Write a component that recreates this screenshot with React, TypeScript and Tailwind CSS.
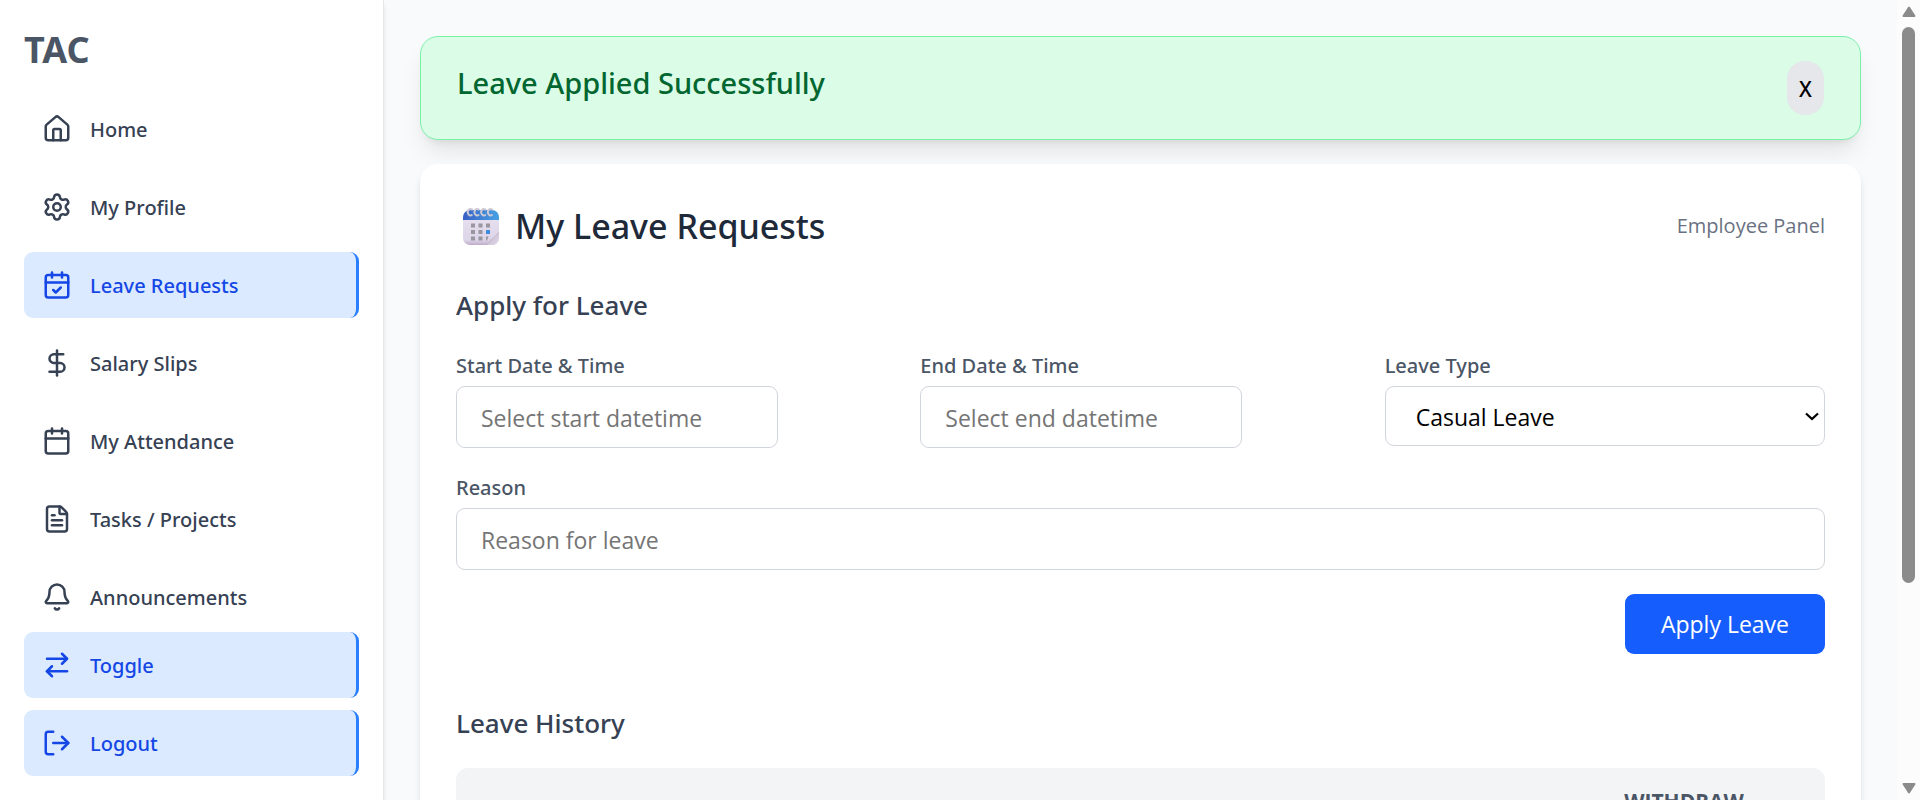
import { useState } from "react";
import {
  ArrowRightLeft,
  Bell,
  Calendar,
  CalendarCheck,
  DollarSign,
  FileText,
  House,
  LogOut,
  Settings,
  type LucideIcon,
} from "lucide-react";

type Item = { label: string; icon: LucideIcon; active?: boolean };

const navItems: Item[] = [
  { label: "Home", icon: House },
  { label: "My Profile", icon: Settings },
  { label: "Leave Requests", icon: CalendarCheck, active: true },
  { label: "Salary Slips", icon: DollarSign },
  { label: "My Attendance", icon: Calendar },
  { label: "Tasks / Projects", icon: FileText },
  { label: "Announcements", icon: Bell },
];

const itemBase =
  "flex h-[66px] w-full shrink-0 items-center gap-[18px] rounded-[9px] px-[18px] text-left text-[20px] font-medium";
const itemActive = "border-r-[3px] border-blue-500 bg-blue-100 text-blue-700";
const itemIdle = "text-gray-700";

function NavLink({ label, icon: Icon, active }: Item) {
  return (
    <a href="#" className={`${itemBase} ${active ? itemActive : itemIdle}`}>
      <Icon size={30} />
      <span className="pt-0.5">{label}</span>
    </a>
  );
}

function SideButton({ label, icon: Icon }: Item) {
  return (
    <button type="button" className={`${itemBase} ${itemActive}`}>
      <Icon size={30} />
      <span className="pt-0.5">{label}</span>
    </button>
  );
}

function Sidebar() {
  return (
    <aside className="z-10 flex w-96 shrink-0 flex-col border-r border-gray-200 bg-white p-6 font-['Noto_Sans','Open_Sans',sans-serif] shadow-md">
      <h1 className="mb-5 text-[36px] leading-[52px] font-bold text-gray-600">TAC</h1>
      <nav className="flex min-h-0 flex-1 flex-col gap-3 overflow-hidden">
        {navItems.map((item) => (
          <NavLink key={item.label} {...item} />
        ))}
      </nav>
      <div className="flex flex-col gap-3">
        <SideButton label="Toggle" icon={ArrowRightLeft} />
        <SideButton label="Logout" icon={LogOut} />
      </div>
    </aside>
  );
}

function CalendarEmoji() {
  return (
    <svg viewBox="0 0 36 37" className="h-[37px] w-9 shrink-0" aria-hidden="true">
      <defs>
        <linearGradient id="calPaper" x1="0" y1="0" x2="0" y2="1">
          <stop offset="0" stopColor="#e9e3f1" />
          <stop offset="0.85" stopColor="#ddd5e8" />
          <stop offset="1" stopColor="#bfaccb" />
        </linearGradient>
        <linearGradient id="calTop" x1="0" y1="0" x2="1" y2="0">
          <stop offset="0" stopColor="#3a5fc4" />
          <stop offset="0.6" stopColor="#4289d8" />
          <stop offset="1" stopColor="#47a0e2" />
        </linearGradient>
        <linearGradient id="calFold" x1="0" y1="0" x2="1" y2="1">
          <stop offset="0" stopColor="#f0ebf5" />
          <stop offset="0.5" stopColor="#cfc6d9" />
          <stop offset="1" stopColor="#e4dded" />
        </linearGradient>
      </defs>
      <rect x="0" y="3" width="36" height="34" rx="7" fill="url(#calPaper)" />
      <path d="M0 12V9a7 7 0 0 1 7-7h22a7 7 0 0 1 7 7v3z" fill="url(#calTop)" />
      <g fill="#98969e">
        <rect x="8" y="15.5" width="4" height="4" />
        <rect x="15.5" y="15.5" width="4" height="4" />
        <rect x="23" y="15.5" width="4" height="4" />
        <rect x="8" y="22" width="4" height="4" />
        <rect x="15.5" y="22" width="4" height="4" />
        <rect x="8" y="28.5" width="4" height="4" />
        <rect x="15.5" y="28.5" width="4" height="4" />
        <path d="M23 28.5h2.500l-1.500 4h-1z" />
      </g>
      <rect x="23" y="22" width="4" height="4" fill="#3e8bdc" />
      <path d="M24 37c1.500-2 2-4 2-6 4 0 7-3 10-7v6a7 7 0 0 1-7 7z" fill="url(#calFold)" />
      <path d="M24 37 36 24" stroke="#c3b8cf" strokeWidth="0.8" />
      <g fill="none" stroke="#cdc9d4" strokeWidth="2" strokeLinecap="round">
        <path d="M9 1.500C6 0 4 3 5 5.500c.6 1.800 2.500 2.500 3.800 1.500" />
        <path d="M15.700 1.500c-3-1.500-5 1.500-4 4 .6 1.800 2.500 2.500 3.800 1.500" />
        <path d="M22.400 1.500c-3-1.500-5 1.500-4 4 .6 1.800 2.500 2.500 3.800 1.500" />
        <path d="M29.100 1.500c-3-1.500-5 1.500-4 4 .6 1.800 2.500 2.500 3.800 1.500" />
      </g>
    </svg>
  );
}

const labelClass =
  "font-['Noto_Sans','Open_Sans',sans-serif] text-[20px] leading-8 font-medium text-gray-600";
const headingClass =
  "mb-6 font-['Noto_Sans','Open_Sans',sans-serif] text-[26px] leading-[42px] font-medium text-gray-700";
const inputClass =
  "h-[62px] rounded-[9px] border border-gray-300 bg-white px-6 pt-0.5 text-[23px] text-black placeholder:text-[#757575]";

function Banner({ onClose }: { onClose: () => void }) {
  return (
    <div
      role="status"
      className="flex items-start justify-between rounded-[18px] border border-green-300 bg-green-100 px-9 py-6 font-['Noto_Sans','Open_Sans',sans-serif] shadow-[0_15px_23px_-5px_rgba(0,0,0,0.1),0_6px_9px_-6px_rgba(0,0,0,0.1)]"
    >
      <p className="text-[29px] leading-[44px] font-medium text-green-800">Leave Applied Successfully</p>
      <button
        type="button"
        onClick={onClose}
        className="h-[54px] w-[37px] rounded-[18px] bg-gray-200 pt-1 text-[21px] font-medium text-black"
      >
        X
      </button>
    </div>
  );
}

function PageScrollbar() {
  return (
    <div aria-hidden="true" className="flex w-[23px] shrink-0 flex-col items-center bg-[#fcfcfc] py-[6px]">
      <svg viewBox="0 0 14 11" className="h-[11px] w-[14px]">
        <path d="M7 1.500 12.500 10h-11z" fill="#8b8b8b" stroke="#8b8b8b" strokeWidth="2" strokeLinejoin="round" />
      </svg>
      <div className="mt-[10px] flex-1 self-center">
        <div className="h-[73.5%] w-[13px] rounded-full bg-[#8b8b8b]" />
      </div>
      <svg viewBox="0 0 14 11" className="h-[11px] w-[14px]">
        <path d="M7 9.500 1.500 1h11z" fill="#8b8b8b" stroke="#8b8b8b" strokeWidth="2" strokeLinejoin="round" />
      </svg>
    </div>
  );
}

export default function App() {
  const [showBanner, setShowBanner] = useState(true);

  return (
    <div className="flex h-screen overflow-hidden bg-gray-50 font-['Open_Sans','Noto_Sans',sans-serif]">
      <Sidebar />
      <main className="flex min-w-0 flex-1 flex-col gap-6 overflow-hidden p-9">
        {showBanner && <Banner onClose={() => setShowBanner(false)} />}
        <section className="shrink-0 rounded-[18px] bg-white p-9 shadow-[0_6px_9px_-1px_rgba(0,0,0,0.1),0_3px_6px_-3px_rgba(0,0,0,0.1)]">
          <header className="mb-8 flex items-center justify-between">
            <h2 className="flex items-center gap-4 pl-[7px] font-['Noto_Sans','Open_Sans',sans-serif] text-[34px] leading-[52px] font-medium text-gray-800">
              <CalendarEmoji />
              My Leave Requests
            </h2>
            <span className="text-[20px] text-gray-500">Employee Panel</span>
          </header>

          <h3 className={headingClass}>Apply for Leave</h3>
          <form className="grid grid-cols-3 gap-x-6 gap-y-6" onSubmit={(e) => e.preventDefault()}>
            <div className="flex flex-col items-start gap-1">
              <label htmlFor="start" className={labelClass}>Start Date &amp; Time</label>
              <input id="start" type="text" placeholder="Select start datetime" className={`w-[322px] ${inputClass}`} />
            </div>
            <div className="flex flex-col items-start gap-1">
              <label htmlFor="end" className={labelClass}>End Date &amp; Time</label>
              <input id="end" type="text" placeholder="Select end datetime" className={`w-[322px] ${inputClass}`} />
            </div>
            <div className="flex flex-col gap-1">
              <label htmlFor="type" className={labelClass}>Leave Type</label>
              <div className="grid items-center">
                <select
                  id="type"
                  className="col-start-1 row-start-1 h-[60px] appearance-none rounded-[9px] border border-gray-300 bg-white px-[30px] pt-0.5 text-[23px] text-black"
                >
                  <option>Casual Leave</option>
                </select>
                <svg
                  viewBox="0 0 14 9"
                  className="pointer-events-none col-start-1 row-start-1 mr-1.5 h-[9px] w-[14px] justify-self-end"
                  aria-hidden="true"
                >
                  <path d="m1 1.500 6 5.500 6-5.500" fill="none" stroke="#000" strokeWidth="2.300" />
                </svg>
              </div>
            </div>
            <div className="col-span-3 flex flex-col gap-1">
              <label htmlFor="reason" className={labelClass}>Reason</label>
              <input id="reason" type="text" placeholder="Reason for leave" className={inputClass} />
            </div>
            <div className="col-span-3 flex justify-end">
              <button type="submit" className="h-[60px] rounded-[9px] bg-blue-600 px-9 text-[23px] text-white">
                Apply Leave
              </button>
            </div>
          </form>

          <h3 className={`mt-12 ${headingClass}`}>Leave History</h3>
          <div className="overflow-hidden rounded-xl">
            <table className="w-full">
              <thead className="bg-gray-100 text-[21px] text-gray-600">
                <tr>
                  <td />
                  <th scope="col" className="w-[282px] py-[18px] text-center leading-[30px] font-bold">
                    WITHDRAW
                  </th>
                </tr>
              </thead>
            </table>
          </div>
        </section>
      </main>
      <PageScrollbar />
    </div>
  );
}
